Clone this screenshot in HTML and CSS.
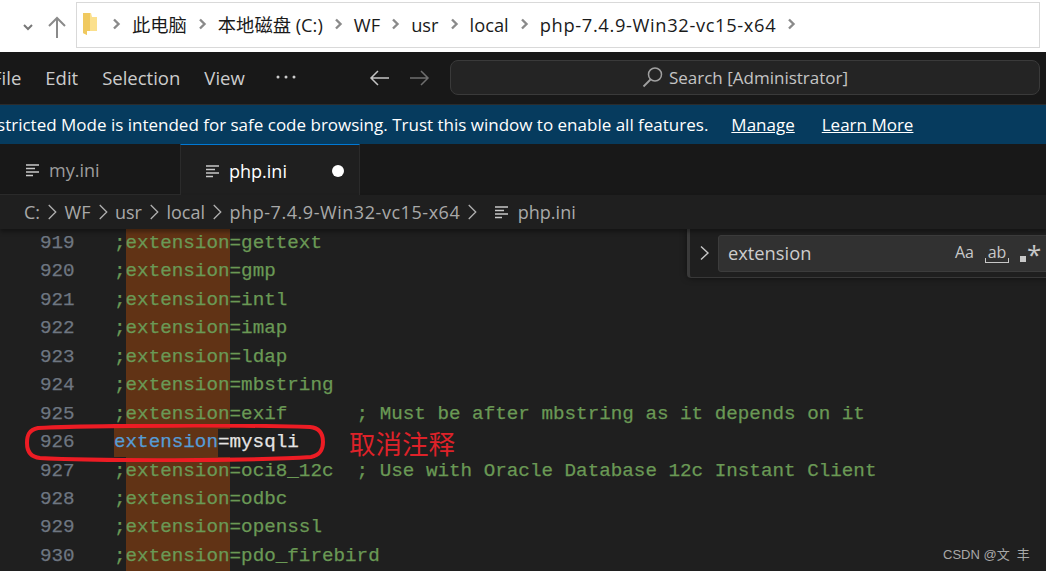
FILE: index.html
```html
<!DOCTYPE html>
<html lang="zh">
<head>
<meta charset="utf-8">
<title>php.ini</title>
<link rel="stylesheet" href="styles.css">
</head>
<body>
<div class="explorer">
  <svg class="nav-chev" width="14" height="10" viewBox="0 0 14 10"><path d="M3 3l4 4 4-4" fill="none" stroke="#777" stroke-width="2"/></svg>
  <svg class="nav-up" width="20" height="24" viewBox="0 0 20 24"><path d="M10 23V3M2 11l8-8 8 8" fill="none" stroke="#8a8a8a" stroke-width="2"/></svg>
  <div class="address">
    <svg class="folder" width="14" height="22" viewBox="0 0 14 22"><path d="M0 0h8l1 4h5v14H4v4l-4-2z" fill="#fbe08d"/><path d="M0 0h7v18H4v4l-4-2z" fill="#f0c95f"/></svg>
    <svg class="sep" viewBox="0 0 8 12"><path d="M1.500 1.500L6 6l-4.500 4.500" fill="none" stroke="#8a8a8a" stroke-width="2.400"/></svg><span>此电脑</span>
    <svg class="sep" viewBox="0 0 8 12"><path d="M1.500 1.500L6 6l-4.500 4.500" fill="none" stroke="#8a8a8a" stroke-width="2.400"/></svg><span>本地磁盘 (C:)</span>
    <svg class="sep" viewBox="0 0 8 12"><path d="M1.500 1.500L6 6l-4.500 4.500" fill="none" stroke="#8a8a8a" stroke-width="2.400"/></svg><span>WF</span>
    <svg class="sep" viewBox="0 0 8 12"><path d="M1.500 1.500L6 6l-4.500 4.500" fill="none" stroke="#8a8a8a" stroke-width="2.400"/></svg><span>usr</span>
    <svg class="sep" viewBox="0 0 8 12"><path d="M1.500 1.500L6 6l-4.500 4.500" fill="none" stroke="#8a8a8a" stroke-width="2.400"/></svg><span>local</span>
    <svg class="sep" viewBox="0 0 8 12"><path d="M1.500 1.500L6 6l-4.500 4.500" fill="none" stroke="#8a8a8a" stroke-width="2.400"/></svg><span class="long-top">php-7.4.9-Win32-vc15-x64</span>
    <svg class="sep" viewBox="0 0 8 12"><path d="M1.500 1.500L6 6l-4.500 4.500" fill="none" stroke="#8a8a8a" stroke-width="2.400"/></svg>
  </div>
</div>
<div class="menubar">
  <nav class="menu">
    <span>File</span><span>Edit</span><span>Selection</span><span>View</span>
    <svg class="dots" width="20" height="4" viewBox="0 0 20 4"><circle cx="2" cy="2" r="1.500" fill="#ccc"/><circle cx="10" cy="2" r="1.500" fill="#ccc"/><circle cx="18" cy="2" r="1.500" fill="#ccc"/></svg>
  </nav>
  <div class="arrows">
    <svg width="20" height="18" viewBox="0 0 20 18"><path d="M20 9H2M9 2L2 9l7 7" fill="none" stroke="#c4c4c4" stroke-width="1.500"/></svg>
    <svg width="20" height="18" viewBox="0 0 20 18"><path d="M0 9h18M11 2l7 7-7 7" fill="none" stroke="#6e6e6e" stroke-width="1.500"/></svg>
  </div>
  <div class="search">
    <svg width="21" height="22" viewBox="0 0 21 22"><circle cx="13" cy="8.500" r="6.500" fill="none" stroke="#a0a0a0" stroke-width="1.500"/><path d="M8.500 13.500L1.500 20.500" stroke="#a0a0a0" stroke-width="1.800"/></svg>
    <span>Search [Administrator]</span>
  </div>
</div>
<div class="banner">
  <span class="banner-msg">Restricted Mode is intended for safe code browsing. Trust this window to enable all features.</span>
  <a class="banner-link first">Manage</a>
  <a class="banner-link">Learn More</a>
</div>
<div class="tabs">
  <div class="tab">
    <svg class="file-icon" width="14" height="14" viewBox="0 0 14 14"><path d="M0 2h13M0 5.500h9M0 9h13M0 12.500h7" stroke="#c8c8c8" stroke-width="1.500"/></svg>
    <span>my.ini</span>
  </div>
  <div class="tab active">
    <svg class="file-icon" width="14" height="14" viewBox="0 0 14 14"><path d="M0 2h13M0 5.500h9M0 9h13M0 12.500h7" stroke="#c8c8c8" stroke-width="1.500"/></svg>
    <span>php.ini</span>
    <i class="dirty"></i>
  </div>
</div>
<div class="breadcrumbs">
  <span>C:</span>
  <svg class="bc-sep" viewBox="0 0 9 16"><path d="M1 1l7 7-7 7" fill="none" stroke="#b0b0b0" stroke-width="1.300"/></svg>
  <span>WF</span>
  <svg class="bc-sep" viewBox="0 0 9 16"><path d="M1 1l7 7-7 7" fill="none" stroke="#b0b0b0" stroke-width="1.300"/></svg>
  <span>usr</span>
  <svg class="bc-sep" viewBox="0 0 9 16"><path d="M1 1l7 7-7 7" fill="none" stroke="#b0b0b0" stroke-width="1.300"/></svg>
  <span>local</span>
  <svg class="bc-sep" viewBox="0 0 9 16"><path d="M1 1l7 7-7 7" fill="none" stroke="#b0b0b0" stroke-width="1.300"/></svg>
  <span class="long-bc">php-7.4.9-Win32-vc15-x64</span>
  <svg class="bc-sep" viewBox="0 0 9 16"><path d="M1 1l7 7-7 7" fill="none" stroke="#b0b0b0" stroke-width="1.300"/></svg>
  <svg class="file-icon bc-file" width="14" height="14" viewBox="0 0 14 14"><path d="M0 2h13M0 5.500h9M0 9h13M0 12.500h7" stroke="#c8c8c8" stroke-width="1.500"/></svg>
  <span>php.ini</span>
</div>
<main class="editor">
  <div class="line"><span class="num">919</span><span class="code">;<mark>extension</mark>=gettext</span></div>
  <div class="line"><span class="num">920</span><span class="code">;<mark>extension</mark>=gmp</span></div>
  <div class="line"><span class="num">921</span><span class="code">;<mark>extension</mark>=intl</span></div>
  <div class="line"><span class="num">922</span><span class="code">;<mark>extension</mark>=imap</span></div>
  <div class="line"><span class="num">923</span><span class="code">;<mark>extension</mark>=ldap</span></div>
  <div class="line"><span class="num">924</span><span class="code">;<mark>extension</mark>=mbstring</span></div>
  <div class="line"><span class="num">925</span><span class="code">;<mark>extension</mark>=exif      ; Must be after mbstring as it depends on it</span></div>
  <div class="line"><span class="num">926</span><span class="code live"><mark class="key">extension</mark>=mysqli</span></div>
  <div class="line"><span class="num">927</span><span class="code">;<mark>extension</mark>=oci8_12c  ; Use with Oracle Database 12c Instant Client</span></div>
  <div class="line"><span class="num">928</span><span class="code">;<mark>extension</mark>=odbc</span></div>
  <div class="line"><span class="num">929</span><span class="code">;<mark>extension</mark>=openssl</span></div>
  <div class="line"><span class="num">930</span><span class="code">;<mark>extension</mark>=pdo_firebird</span></div>

  <div class="find">
    <svg width="12" height="16" viewBox="0 0 12 16"><path d="M2 1.500l7 6.500-7 6.500" fill="none" stroke="#c8c8c8" stroke-width="1.400"/></svg>
    <div class="find-input">
      <span class="find-text">extension</span>
      <span class="find-opt">Aa</span>
      <span class="find-opt word">ab</span>
      <span class="find-opt regex"><i></i>*</span>
    </div>
  </div>

  <svg class="ellipse" width="302" height="38" viewBox="0 0 302 38"><path d="M14 4C70 1 230 1 286 3c10 1 13 7 13 15s-3 13-12 15C230 37 70 37 16 34 6 33 3 27 3 19S5 6 14 4z" fill="none" stroke="#ed1c24" stroke-width="4"/></svg>
  <span class="note">取消注释</span>
  <span class="watermark">CSDN @文  丰</span>
</main>
</body>
</html>
```
FILE: styles.css
```css
* { box-sizing: border-box; }
html, body { margin: 0; padding: 0; }
body {
  width: 1046px;
  height: 571px;
  overflow: hidden;
  background: #1f1f1f;
  font-family: "Open Sans", "Noto Sans CJK SC", sans-serif;
  display: flex;
  flex-direction: column;
}
.explorer {
  height: 52px;
  flex: none;
  background: #fff;
  display: flex;
  align-items: flex-start;
  padding: 2px 6px 0 21px;
}
.nav-chev { margin-top: 20px; }
.nav-up { margin: 13px 0 0 12px; }
.address {
  margin-left: 9px;
  flex: 1;
  height: 46px;
  border: 1px solid #d9d9d9;
  display: flex;
  align-items: center;
  padding: 0 0 2px 6px;
  color: #1a1a1a;
  font-size: 18.300px;
  white-space: nowrap;
}
.folder { flex: none; margin-right: 4px; }
.sep {
  flex: none;
  width: 31px;
  height: 12px;
  padding: 0;
}
.long-top { letter-spacing: .65px; }
.menubar {
  height: 53px;
  flex: none;
  background: #181818;
  border-bottom: 1px solid #2b2b2b;
  display: flex;
  align-items: center;
  color: #cccccc;
  font-size: 18.500px;
}
.menu {
  display: flex;
  align-items: center;
  gap: 24px;
  margin: -2px 0 0 -8px;
  width: 377px;
  flex: none;
}
.dots { margin-left: 7px; }
.arrows { display: flex; gap: 21px; width: 81px; flex: none; }
.search {
  width: 590px;
  height: 35px;
  flex: none;
  background: #242424;
  border: 1px solid #3a3a3a;
  border-radius: 8px;
  display: flex;
  align-items: center;
  justify-content: center;
  gap: 6px;
  font-size: 17px;
  color: #c4c4c4;
  margin-top: -2px;
}
.banner {
  height: 39px;
  flex: none;
  background: #063b5e;
  color: #fff;
  display: flex;
  align-items: center;
  font-size: 17px;
  white-space: nowrap;
}
.banner-msg { margin-left: -23px; }
.banner-link { text-decoration: underline; margin-left: 27px; }
.banner-link.first { margin-left: 23px; }
.tabs {
  height: 51px;
  flex: none;
  background: #181818;
  display: flex;
  font-size: 18px;
}
.tab {
  width: 180px;
  display: flex;
  align-items: center;
  gap: 9px;
  padding: 2px 0 0 26px;
  color: #9d9d9d;
  border-bottom: 1px solid #2b2b2b;
}
.tab.active {
  background: #1f1f1f;
  color: #fff;
  border-top: 1px solid #0078d4;
  border-left: 1px solid #2b2b2b;
  border-right: 1px solid #2b2b2b;
  border-bottom: 0;
  padding-left: 25px;
}
.dirty {
  width: 12px;
  height: 12px;
  border-radius: 50%;
  background: #fff;
  margin-left: 36px;
}
.breadcrumbs {
  height: 34px;
  flex: none;
  background: #1f1f1f;
  display: flex;
  align-items: center;
  padding-left: 24px;
  font-size: 18px;
  color: #a9a9a9;
  box-shadow: 0 3px 4px rgba(0, 0, 0, .35);
  position: relative;
  z-index: 1;
}
.bc-sep { flex: none; width: 24.500px; height: 16px; }
.long-bc { letter-spacing: .55px; }
.bc-file { margin: 0 9px 0 10px; }
.editor {
  flex: 1;
  position: relative;
  background: #1f1f1f;
  font-family: "Liberation Mono", monospace;
  font-size: 19.250px;
  overflow: hidden;
  -webkit-text-stroke: .25px currentColor;
}
.line {
  height: 28.450px;
  line-height: 28.450px;
  display: flex;
  white-space: pre;
}
.num { width: 114px; padding-left: 40px; color: #6e7681; flex: none; }
.code { color: #6a9955; }
.code mark {
  background: #613315;
  color: inherit;
  display: inline-block;
  height: 29px;
  vertical-align: top;
}
.code.live { color: #e4e4e4; }
.code mark.key { color: #569cd6; }
.find {
  position: absolute;
  top: 0;
  left: 687px;
  width: 370px;
  height: 49px;
  background: #1f1f1f;
  border-left: 3px solid #3a3a3a;
  border-bottom: 1px solid #383838;
  border-bottom-left-radius: 4px;
  display: flex;
  align-items: center;
  padding: 0 0 0 9px;
  gap: 7px;
  box-shadow: 0 0 6px rgba(0, 0, 0, .5);
  font-family: "Open Sans", sans-serif;
  -webkit-text-stroke: 0;
}
.find-input {
  flex: 1;
  height: 37px;
  background: #313131;
  border: 1px solid #3c3c3c;
  border-radius: 3px;
  display: flex;
  align-items: center;
  padding: 0 0 2px 9px;
  color: #cccccc;
  font-size: 18.300px;
}
.find-text { width: 227px; }
.find-opt { font-size: 16px; width: 30px; color: #c8c8c8; }
.find-opt.word {
  position: relative;
  width: 24px;
  margin-right: 11px;
  text-align: center;
  line-height: 20px;
}
.find-opt.word::after {
  content: "";
  position: absolute;
  left: 0;
  right: 0;
  bottom: -1px;
  height: 4px;
  border: 1px solid #c8c8c8;
  border-top: 0;
}
.find-opt.regex { font-size: 26px; line-height: 1; display: flex; align-items: flex-start; height: 22px; }
.find-opt.regex i { width: 6px; height: 6px; background: #c8c8c8; margin: 15px 1px 0 0; }
.ellipse { position: absolute; left: 24px; top: 195px; }
.note {
  position: absolute;
  left: 349px;
  top: 196px;
  color: #dd2229;
  font-family: "Noto Sans CJK SC", sans-serif;
  font-size: 26.500px;
  line-height: 36px;
  -webkit-text-stroke: 0;
}
.watermark {
  position: absolute;
  left: 943px;
  top: 315px;
  font-family: "Liberation Sans", "Noto Sans CJK SC", sans-serif;
  font-size: 13px;
  color: #a8a8a8;
  white-space: pre;
  -webkit-text-stroke: 0;
}
```
